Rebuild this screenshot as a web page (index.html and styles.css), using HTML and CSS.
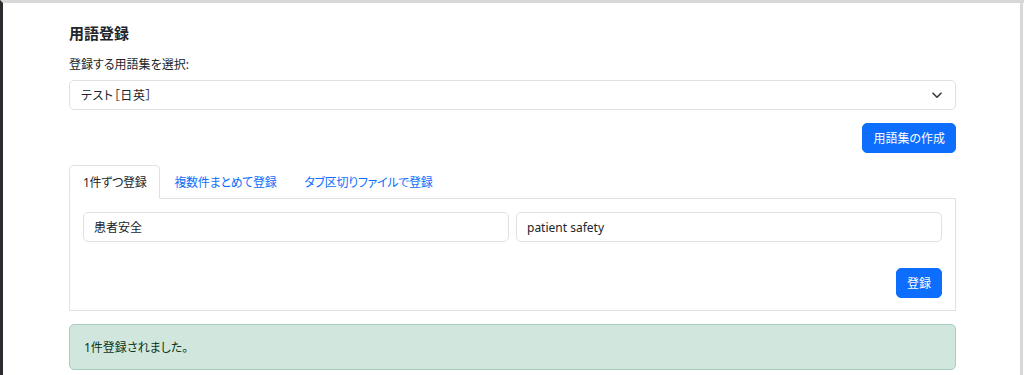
FILE: index.html
```html
<!DOCTYPE html>
<html lang="ja">
<head>
<meta charset="utf-8">
<title>用語登録</title>
<link rel="stylesheet" href="styles.css">
</head>
<body>
<div class="window">
  <main class="page">
    <div class="container">
      <h1 class="title">用語登録</h1>
      <label class="label" for="glossary">登録する用語集を選択:</label>
      <div class="select">
        <span class="select-text">テスト［日英］</span>
        <svg class="chev" width="10" height="7" viewBox="0 0 10 7"><path d="M1 1.2 5 5.2 9 1.2" fill="none" stroke="#343a40" stroke-width="1.6" stroke-linecap="round" stroke-linejoin="round"/></svg>
      </div>
      <div class="row-end">
        <button class="btn">用語集の作成</button>
      </div>
      <nav class="tabs">
        <a class="tab active">1件ずつ登録</a>
        <a class="tab">複数件まとめて登録</a>
        <a class="tab">タブ区切りファイルで登録</a>
      </nav>
      <section class="tab-content">
        <div class="inputs">
          <div class="input">患者安全</div>
          <div class="input">patient safety</div>
        </div>
        <div class="row-end submit">
          <button class="btn">登録</button>
        </div>
      </section>
      <div class="alert">1件登録されました。</div>
    </div>
  </main>
  <div class="edge"></div>
</div>
</body>
</html>
```

FILE: styles.css
```css
* { box-sizing: border-box; }
html, body { margin: 0; padding: 0; background: #fff; }
body {
  font-family: "Noto Sans", "Noto Sans CJK JP", sans-serif;
  font-size: 12px;
  color: #212529;
  font-feature-settings: "palt";
}
.window {
  display: flex;
  width: 1024px;
  height: 375px;
  overflow: hidden;
  border-left: 3px solid #2a2c2f;
  border-top: 3px solid #d8d8d8;
}
.page { flex: 1; }
.edge {
  width: 4px;
  border-left: 3px solid #d8d8d8;
  background: #fff;
}
.container {
  width: 887px;
  margin-left: 66px;
}
.title {
  margin: 21px 0 0;
  font-size: 15px;
  line-height: 18px;
  font-weight: 700;
}
.label {
  display: block;
  margin-top: 14px;
  line-height: 18px;
}
.select {
  margin-top: 6px;
  height: 30px;
  border: 1px solid #dee2e6;
  border-radius: 5px;
  display: flex;
  align-items: center;
  justify-content: space-between;
  padding: 0 13px 0 11px;
}
.select-text { letter-spacing: 0.6px; }
.chev { display: block; }
.row-end {
  display: flex;
  justify-content: flex-end;
  margin-top: 13px;
}
.btn {
  font: inherit;
  height: 30px;
  padding: 0 10px;
  border: 1px solid #0d6efd;
  border-radius: 5px;
  background: #0d6efd;
  color: #fff;
}
.tabs {
  display: flex;
  margin-top: 12px;
  border-bottom: 1px solid #dee2e6;
  height: 34px;
}
.tab {
  display: flex;
  align-items: center;
  padding: 0 13px;
  height: 34px;
  letter-spacing: -0.3px;
  color: #0d6efd;
  border: 1px solid transparent;
  border-top-left-radius: 5px;
  border-top-right-radius: 5px;
}
.tab.active {
  color: #212529;
  background: #fff;
  border-color: #dee2e6 #dee2e6 #fff;
  margin-bottom: -1px;
}
.tab-content {
  border: 1px solid #dee2e6;
  border-top: none;
  padding: 13px 13px 12px;
}
.inputs {
  display: grid;
  grid-template-columns: 1fr 1fr;
  gap: 7px;
}
.input {
  height: 30px;
  border: 1px solid #dee2e6;
  border-radius: 5px;
  display: flex;
  align-items: center;
  padding: 0 10px;
}
.submit { margin-top: 26px; }
.alert {
  margin-top: 13px;
  height: 46px;
  display: flex;
  align-items: center;
  padding: 0 14px;
  background: #d1e7dd;
  border: 1px solid #a3cfbb;
  border-radius: 5px;
  color: #0a3622;
}
```
